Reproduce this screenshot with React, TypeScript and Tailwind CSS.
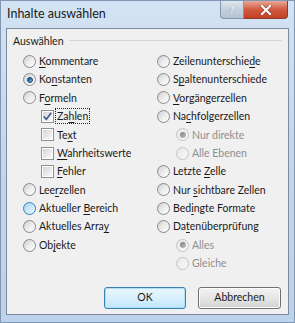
import React from "react";

const U = ({ children }: { children: React.ReactNode }) => (
  <span className="underline underline-offset-[2px] decoration-[1px]">{children}</span>
);

function Radio({ checked, disabled, hover }: { checked?: boolean; disabled?: boolean; hover?: boolean }) {
  let ring = "border-[#8a8a8a] bg-linear-to-br from-[#cfcfcf] via-[#ececec] to-[#ffffff]";
  if (hover) ring = "border-[#3c7fb1] bg-linear-to-br from-[#9fd4f1] via-[#c9e9f9] to-[#eaf7fe]";
  if (disabled) ring = "border-[#c4c4c4] bg-linear-to-br from-[#e6e6e6] to-[#fafafa]";
  return (
    <span className={`relative flex items-center justify-center w-[13px] h-[13px] rounded-full border shrink-0 ${ring}`}>
      {checked && !disabled && (
        <span className="w-[6px] h-[6px] rounded-full bg-linear-to-br from-[#0f4f86] via-[#2a86c4] to-[#6fd0f6] border border-[#1a3f66]" />
      )}
      {checked && disabled && (
        <span className="w-[6px] h-[6px] rounded-full bg-linear-to-br from-[#7a7a7a] to-[#c6c6c6]" />
      )}
    </span>
  );
}

function Check({ checked }: { checked?: boolean }) {
  return (
    <span className="relative flex items-center justify-center w-[13px] h-[13px] border border-[#8e8f8f] bg-white shrink-0">
      <span className="absolute inset-[1px] bg-linear-to-br from-[#d4d4d4] to-[#f9f9f9]" />
      {checked && (
        <svg width="11" height="11" viewBox="0 0 11 11" className="relative">
          <path d="M1.8 5.6 L4.3 8.3 L9.3 1.8" fill="none" stroke="#3d4f8f" strokeWidth="1.5" />
        </svg>
      )}
    </span>
  );
}

function Row({ children, indent = 0 }: { children: React.ReactNode; indent?: number }) {
  return (
    <div className="h-[18.4px] flex items-center" style={indent ? { paddingLeft: indent } : undefined}>
      {children}
    </div>
  );
}

function RLabel({ children, disabled }: { children: React.ReactNode; disabled?: boolean }) {
  return <span className={`ml-[3px] leading-none ${disabled ? "text-[#8f8f8f]" : "text-[#1a1a1a]"}`}>{children}</span>;
}

export default function App() {
  return (
    <div
      className="w-[295px] h-[323px] flex flex-col border border-[#7f97b2] bg-linear-to-b from-[#d3e3f3] via-[#c2d6ec] to-[#bdd3eb] overflow-hidden"
      style={{ fontFamily: "Lato, 'Noto Sans', sans-serif" }}
    >
      {/* title bar */}
      <div className="h-[27px] flex items-start shrink-0">
        <div className="pl-[6px] pt-[6px] text-[12.5px] leading-[14px] text-[#1a1a1a]">
          Inhalte auswählen
        </div>
        <div className="ml-auto mr-[6px] flex">
          <div className="w-[24px] h-[18px] rounded-bl-[4px] border border-t-0 border-[#8495a8] bg-linear-to-b from-[#dfe7ef] via-[#c3cfdb] to-[#b4c3d2] flex items-center justify-center text-[#f4f7fa] text-[12px] font-bold leading-none">
            <span className="[text-shadow:0_0_1px_#6f8196]">?</span>
          </div>
          <div className="w-[44px] h-[18px] rounded-br-[4px] border border-t-0 border-l-0 border-[#8b3b2c] bg-linear-to-b from-[#e9a897] via-[#cf5a3f] to-[#c43f23] flex items-center justify-center">
            <svg width="14" height="10" viewBox="0 0 14 10">
              <path d="M3 1 L11 9 M11 1 L3 9" stroke="#5a1a10" strokeWidth="3.4" strokeLinecap="square" opacity="0.5" />
              <path d="M3 1 L11 9 M11 1 L3 9" stroke="#ffffff" strokeWidth="2.2" strokeLinecap="square" />
            </svg>
          </div>
        </div>
      </div>

      {/* content */}
      <div className="mx-[5px] mb-[7px] flex-1 border border-[#7d8c9c] bg-[#f0f0f0] flex flex-col text-[10.5px]">
        <div className="mt-[5px] h-[14px] flex items-center pl-[6px] pr-[6px]">
          <span className="text-[#1a1a1a] leading-none">Auswählen</span>
          <span className="ml-[5px] flex-1 h-[2px] border-t border-[#d5d5d5] border-b-white" />
        </div>

        <div className="mt-[4px] flex pl-[16px]">
          <div className="w-[134px] flex flex-col">
            <Row><Radio /><RLabel><U>K</U>ommentare</RLabel></Row>
            <Row><Radio checked /><RLabel>Ko<U>n</U>stanten</RLabel></Row>
            <Row><Radio /><RLabel>F<U>o</U>rmeln</RLabel></Row>
            <Row indent={18}>
              <Check checked />
              <span className="ml-[1px] h-[16px] px-[1px] flex items-center border border-dotted border-[#222] text-[#1a1a1a] leading-none">Za<U>h</U>len</span>
            </Row>
            <Row indent={18}><Check /><RLabel>Te<U>x</U>t</RLabel></Row>
            <Row indent={18}><Check /><RLabel><U>W</U>ahrheitswerte</RLabel></Row>
            <Row indent={18}><Check /><RLabel><U>F</U>ehler</RLabel></Row>
            <Row><Radio /><RLabel>Lee<U>r</U>zellen</RLabel></Row>
            <Row><Radio hover /><RLabel>Aktueller <U>B</U>ereich</RLabel></Row>
            <Row><Radio /><RLabel>Aktuelles Arra<U>y</U></RLabel></Row>
            <Row><Radio /><RLabel>Ob<U>j</U>ekte</RLabel></Row>
          </div>
          <div className="flex flex-col">
            <Row><Radio /><RLabel>Zeilenunterschie<U>d</U>e</RLabel></Row>
            <Row><Radio /><RLabel>S<U>p</U>altenunterschiede</RLabel></Row>
            <Row><Radio /><RLabel><U>V</U>orgängerzellen</RLabel></Row>
            <Row><Radio /><RLabel>Na<U>c</U>hfolgerzellen</RLabel></Row>
            <Row indent={19}><Radio checked disabled /><RLabel disabled>Nur direkte</RLabel></Row>
            <Row indent={19}><Radio disabled /><RLabel disabled>Alle Ebenen</RLabel></Row>
            <Row><Radio /><RLabel>Letzte <U>Z</U>elle</RLabel></Row>
            <Row><Radio /><RLabel>Nur <U>s</U>ichtbare Zellen</RLabel></Row>
            <Row><Radio /><RLabel>Bed<U>i</U>ngte Formate</RLabel></Row>
            <Row><Radio /><RLabel>Da<U>t</U>enüberprüfung</RLabel></Row>
            <Row indent={19}><Radio checked disabled /><RLabel disabled>Alles</RLabel></Row>
            <Row indent={19}><Radio disabled /><RLabel disabled>Gleiche</RLabel></Row>
          </div>
        </div>

        <div className="mt-[14px] flex justify-end gap-[12px] pr-[7px]">
          <button className="w-[82px] h-[22px] rounded-[3px] border border-[#3c7fb1] bg-linear-to-b from-[#eaf6fd] via-[#d9f0fc] to-[#bee6fd] shadow-[inset_0_0_0_1px_#aee0f8] text-[#1a1a1a] leading-none">
            OK
          </button>
          <button className="w-[83px] h-[22px] rounded-[3px] border border-[#707070] bg-linear-to-b from-[#f2f2f2] via-[#e6e6e6] to-[#d2d2d2] shadow-[inset_0_0_0_1px_#fcfcfc] text-[#1a1a1a] leading-none">
            Abbrechen
          </button>
        </div>
      </div>
    </div>
  );
}
